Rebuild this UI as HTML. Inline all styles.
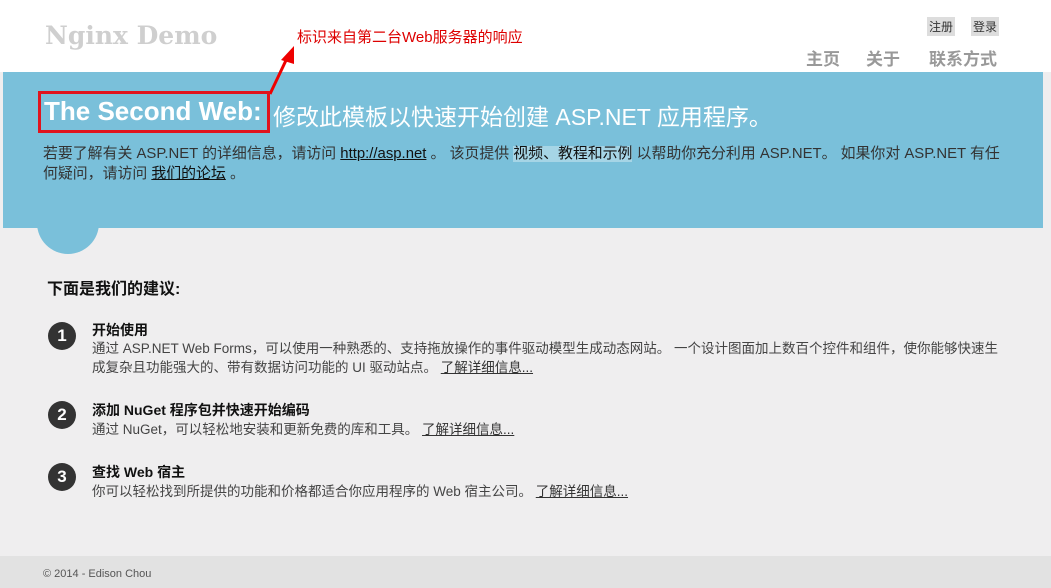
<!DOCTYPE html>
<html><head><meta charset="utf-8"><style>
*{margin:0;padding:0;box-sizing:border-box}
body{width:1051px;height:588px;background:#efeeef;font-family:"Liberation Sans","Noto Sans CJK SC",sans-serif;position:relative;overflow:hidden;color:#333}
.a{position:absolute;white-space:nowrap}
#top{position:absolute;left:0;top:0;width:1051px;height:72px;background:#fff}
#band{position:absolute;left:3px;top:72px;width:1040px;height:156px;background:#7ac0da}
#circ{position:absolute;left:37px;top:192px;width:62px;height:62px;border-radius:50%;background:#7ac0da}
#foot{position:absolute;left:0;top:556px;width:1051px;height:32px;background:#e2e2e2}
.num{position:absolute;left:48px;width:28px;height:28px;border-radius:50%;background:#333;color:#fff;font-weight:bold;font-size:17px;text-align:center;line-height:28px}
.t{font-weight:bold;font-size:14px;color:#111}
.d{font-size:13.5px;color:#444}
u{color:#333}
</style></head><body>
<div id="top"></div>
<div class="a" style="left:45px;top:21px;font-family:'DejaVu Serif',serif;font-size:25px;font-weight:bold;color:#cfcfcf">Nginx Demo</div>
<div class="a" style="left:297px;top:26px;font-size:15px;color:#d00">标识来自第二台Web服务器的响应</div>
<div class="a" style="left:927px;top:17px;font-size:12px;background:#ddd;padding:1px 2px;color:#333">注册</div>
<div class="a" style="left:971px;top:17px;font-size:12px;background:#ddd;padding:1px 2px;color:#333">登录</div>
<div class="a" style="left:806px;top:45px;font-size:17px;color:#999;font-weight:bold">主页</div>
<div class="a" style="left:866px;top:45px;font-size:17px;color:#999;font-weight:bold">关于</div>
<div class="a" style="left:929px;top:45px;font-size:17px;color:#999;font-weight:bold">联系方式</div>
<div id="circ"></div>
<div id="band"></div>
<svg class="a" style="left:260px;top:40px" width="45" height="60"><line x1="10" y1="54" x2="29" y2="14" stroke="#e00" stroke-width="3"/><polygon points="34,6 21,20 34,24" fill="#e00"/></svg>
<div class="a" style="left:38px;top:91px;width:232px;height:42px;border:3px solid #e0141e"></div>
<div class="a" style="left:44px;top:96px;font-size:26px;color:#fff;font-weight:bold">The Second Web:</div>
<div class="a" style="left:273px;top:98px;font-size:23px;color:#fff">修改此模板以快速开始创建 ASP.NET 应用程序。</div>
<div class="a" style="left:43px;top:144px;font-size:14.9px;color:#333;line-height:20px">若要了解有关 ASP.NET 的详细信息，请访问 <u style="color:#111">http://asp.net</u> 。 该页提供 <span style="background:#a6d5e6;color:#111">视频、教程和示例</span> 以帮助你充分利用 ASP.NET。 如果你对 ASP.NET 有任<br>何疑问，请访问 <u style="color:#111">我们的论坛</u> 。</div>
<div class="a" style="left:47px;top:275px;font-size:16px;font-weight:bold;color:#111">下面是我们的建议:</div>
<div class="num" style="top:322px">1</div>
<div class="a t" style="left:92px;top:320px">开始使用</div>
<div class="a d" style="left:92px;top:339px;line-height:19px">通过 ASP.NET Web Forms，可以使用一种熟悉的、支持拖放操作的事件驱动模型生成动态网站。 一个设计图面加上数百个控件和组件，使你能够快速生<br>成复杂且功能强大的、带有数据访问功能的 UI 驱动站点。 <u>了解详细信息...</u></div>
<div class="num" style="top:401px">2</div>
<div class="a t" style="left:92px;top:400px">添加 NuGet 程序包并快速开始编码</div>
<div class="a d" style="left:92px;top:418px">通过 NuGet，可以轻松地安装和更新免费的库和工具。 <u>了解详细信息...</u></div>
<div class="num" style="top:463px">3</div>
<div class="a t" style="left:92px;top:462px">查找 Web 宿主</div>
<div class="a d" style="left:92px;top:480px">你可以轻松找到所提供的功能和价格都适合你应用程序的 Web 宿主公司。 <u>了解详细信息...</u></div>
<div id="foot"></div>
<div class="a" style="left:43px;top:568px;font-size:11px;color:#555">© 2014 - Edison Chou</div>
</body></html>
